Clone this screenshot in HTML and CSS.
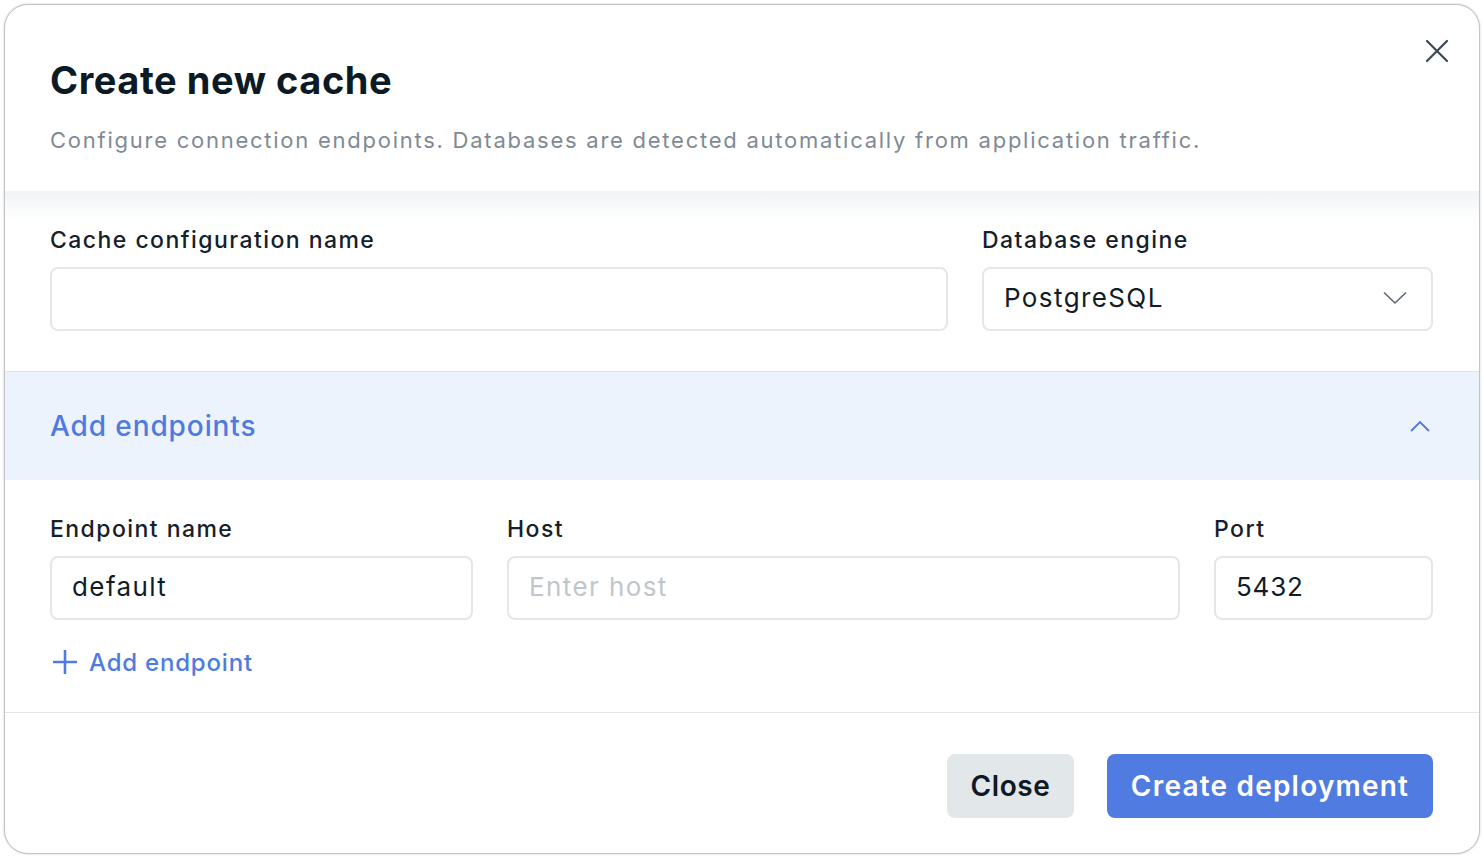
FILE: index.html
```html
<!DOCTYPE html>
<html>
<head>
<meta charset="utf-8">
<link rel="stylesheet" href="styles.css">
</head>
<body>
<div class="modal">
  <header class="modal-header">
    <h1 class="title">Create new cache</h1>
    <p class="subtitle">Configure connection endpoints. Databases are detected automatically from application traffic.</p>
    <button class="close-x" aria-label="Close">
      <svg width="24" height="24" viewBox="0 0 24 24"><path d="M2 2 L22 22 M22 2 L2 22" stroke="#3b4752" stroke-width="2.2" fill="none" stroke-linecap="round"/></svg>
    </button>
  </header>
  <div class="modal-body">
    <section class="section top-fields">
      <div class="field grow">
        <label class="label">Cache configuration name</label>
        <div class="input"></div>
      </div>
      <div class="field engine">
        <label class="label">Database engine</label>
        <div class="input select">
          <span>PostgreSQL</span>
          <svg width="24" height="14" viewBox="0 0 24 14"><path d="M1 1.5 L12 12 L23 1.5" stroke="#5b6670" stroke-width="1.6" fill="none"/></svg>
        </div>
      </div>
    </section>
    <div class="band">
      <span class="band-title">Add endpoints</span>
      <svg width="20" height="12" viewBox="0 0 20 12"><path d="M1 11 L10 2 L19 11" stroke="#4f7be0" stroke-width="1.9" fill="none"/></svg>
    </div>
    <section class="section endpoints">
      <div class="ep-row">
        <div class="field ep-name">
          <label class="label">Endpoint name</label>
          <div class="input">default</div>
        </div>
        <div class="field grow">
          <label class="label">Host</label>
          <div class="input placeholder">Enter host</div>
        </div>
        <div class="field ep-port">
          <label class="label">Port</label>
          <div class="input digits">5432</div>
        </div>
      </div>
      <div class="add-ep">
        <svg width="26" height="26" viewBox="0 0 26 26"><path d="M13 1 V25 M1 13 H25" stroke="#4f7be0" stroke-width="2.6" fill="none"/></svg>
        <span>Add endpoint</span>
      </div>
    </section>
  </div>
  <footer class="modal-footer">
    <button class="btn btn-close">Close</button>
    <button class="btn btn-primary">Create deployment</button>
  </footer>
</div>
</body>
</html>
```
FILE: styles.css
```css
* { box-sizing: border-box; }
html, body { margin: 0; padding: 0; background: #ffffff; }
body { font-family: Inter, "Noto Sans", sans-serif; color: #111d28; }

.modal {
  position: relative;
  margin: 4px;
  width: 1476px;
  height: 850px;
  border: 1px solid #c4c4c4;
  border-radius: 24px;
  box-shadow: 0 0 2px rgba(0,0,0,0.25);
  overflow: hidden;
  display: flex;
  flex-direction: column;
  background: #fff;
}

.modal-header {
  position: relative;
  padding: 51px 46px 34px 45px;
  height: 186px;
}
.title {
  margin: 0;
  font-size: 38px;
  line-height: 48px;
  font-weight: 700;
  color: #0c1a25;
  letter-spacing: 0.55px;
}
.subtitle {
  margin: 20px 0 0;
  font-size: 22px;
  line-height: 32px;
  color: #808a94;
  font-weight: 400;
  letter-spacing: 1.75px;
}
.close-x {
  position: absolute;
  top: 34px;
  right: 30px;
  width: 24px;
  height: 24px;
  padding: 0;
  border: 0;
  background: none;
}
.close-x svg { display: block; }

.modal-body {
  flex: 1;
  background: linear-gradient(#f1f3f5, #ffffff 28px);
  display: flex;
  flex-direction: column;
}

.section { padding: 33px 46px 0 45px; }
.top-fields {
  display: flex;
  gap: 34px;
  height: 181px;
  border-bottom: 1px solid #e2e6ea;
}
.field { display: flex; flex-direction: column; gap: 11px; }
.grow { flex: 1; }
.engine { width: 451px; }
.label {
  font-size: 23px;
  line-height: 32px;
  font-weight: 500;
  color: #16202a;
  letter-spacing: 1.45px;
}
.input {
  height: 64px;
  border: 2px solid #e3e7eb;
  border-radius: 8px;
  background: #fff;
  padding: 0 20px 3px;
  display: flex;
  align-items: center;
  font-size: 26px;
  color: #101c27;
  letter-spacing: 1.4px;
}
.digits { letter-spacing: 0.8px; }
.select { justify-content: space-between; padding-right: 24px; }
.select svg { display: block; }
.placeholder { color: #c0c6cc; }

.band {
  height: 108px;
  background: #edf3fd;
  display: flex;
  align-items: center;
  justify-content: space-between;
  padding: 0 49px 0 45px;
}
.band-title {
  font-size: 28px;
  color: #4f7be0;
  font-weight: 500;
  letter-spacing: 0.9px;
}
.band svg { display: block; }

.endpoints { padding-bottom: 34px; border-bottom: 1px solid #e2e6ea; }
.ep-row { display: flex; gap: 34px; }
.ep-name { width: 423px; }
.ep-port { width: 219px; }
.add-ep {
  margin-top: 26px;
  display: flex;
  align-items: center;
  gap: 11px;
  height: 32px;
  padding-left: 2px;
  color: #4f7be0;
  font-size: 24px;
  font-weight: 500;
  letter-spacing: 0.8px;
}
.add-ep svg { display: block; }

.modal-footer {
  display: flex;
  justify-content: flex-end;
  gap: 33px;
  padding: 41px 46px 35px 45px;
}
.btn {
  height: 64px;
  border: 0;
  border-radius: 8px;
  font-family: Inter, "Noto Sans", sans-serif;
  font-size: 28px;
  font-weight: 600;
  padding: 0;
}
.btn-close { background: #e2e7ea; color: #0f1a24; width: 127px; letter-spacing: 0.6px; }
.btn-primary { background: #507ce1; color: #fff; width: 326px; letter-spacing: 1.2px; }
```
